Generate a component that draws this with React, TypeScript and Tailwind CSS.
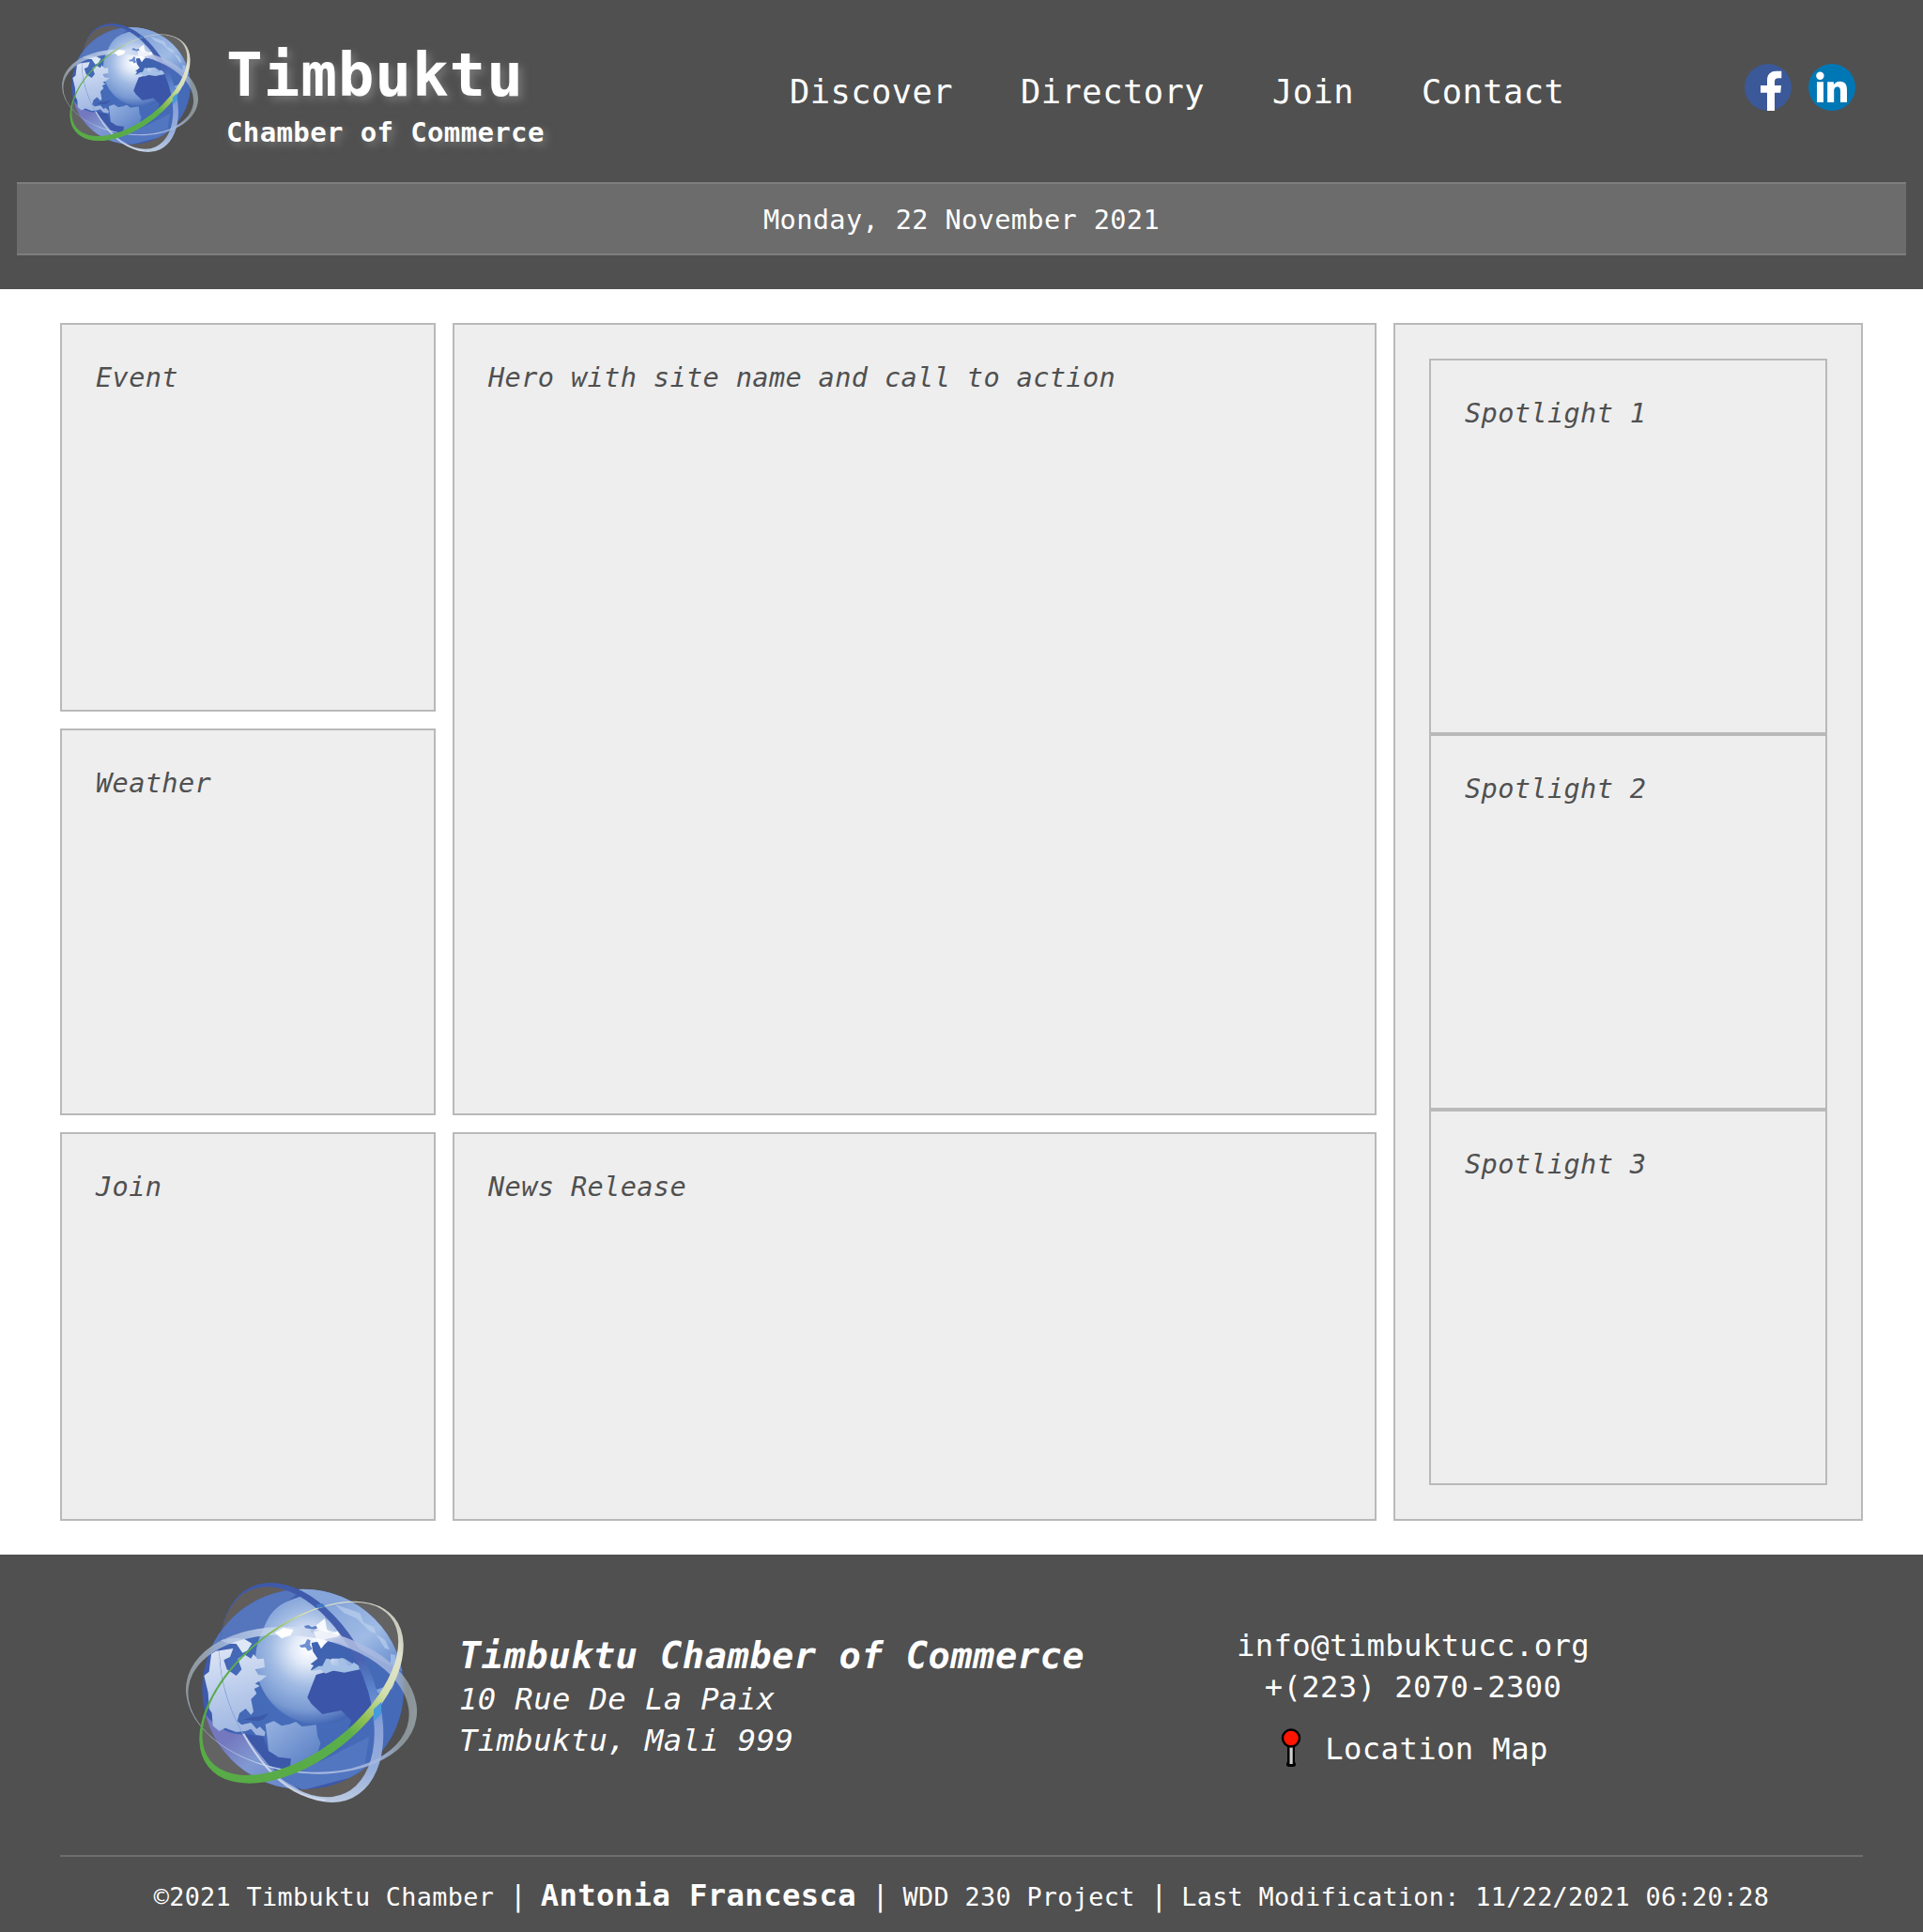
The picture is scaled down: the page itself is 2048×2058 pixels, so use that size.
import React from "react";

type Ellipse = { cx: number; cy: number; rx: number; ry: number; angle: number };

function RingMask({ id, outer, inner }: { id: string; outer: Ellipse; inner: Ellipse }) {
  return (
    <mask id={id} maskUnits="userSpaceOnUse" x="0" y="0" width="900" height="900">
      <ellipse cx={outer.cx} cy={outer.cy} rx={outer.rx} ry={outer.ry} transform={`rotate(${outer.angle} ${outer.cx} ${outer.cy})`} fill="#fff" />
      <ellipse cx={inner.cx} cy={inner.cy} rx={inner.rx} ry={inner.ry} transform={`rotate(${inner.angle} ${inner.cx} ${inner.cy})`} fill="#000" />
    </mask>
  );
}

function Globe({ id, className }: { id: string; className: string }) {
  const u = (n: string) => `url(#${id}-${n})`;
  return (
    <svg viewBox="54 108 738 702" className={className} preserveAspectRatio="none" aria-hidden="true">
      <defs>
        <radialGradient id={`${id}-ball`} gradientUnits="userSpaceOnUse" cx="430" cy="430" r="330">
          <stop offset="0" stopColor="#4670bd" />
          <stop offset="0.75" stopColor="#4468b6" />
          <stop offset="1" stopColor="#3c57ab" />
        </radialGradient>
        <radialGradient id={`${id}-glow`} gradientUnits="userSpaceOnUse" cx="445" cy="320" r="245">
          <stop offset="0" stopColor="#ffffff" />
          <stop offset="0.2" stopColor="#e3ebf8" />
          <stop offset="0.5" stopColor="#a0bae3" />
          <stop offset="0.8" stopColor="#7899d2" />
          <stop offset="1" stopColor="#4468b6" />
        </radialGradient>
        <linearGradient id={`${id}-na`} gradientUnits="userSpaceOnUse" x1="150" y1="300" x2="230" y2="600">
          <stop offset="0" stopColor="#dfe7f6" />
          <stop offset="0.5" stopColor="#bccdec" />
          <stop offset="1" stopColor="#9cb4e0" />
        </linearGradient>
        <linearGradient id={`${id}-sa`} gradientUnits="userSpaceOnUse" x1="320" y1="560" x2="450" y2="720">
          <stop offset="0" stopColor="#93afdf" />
          <stop offset="1" stopColor="#567cc2" />
        </linearGradient>
        <linearGradient id={`${id}-asia`} gradientUnits="userSpaceOnUse" x1="540" y1="160" x2="720" y2="400">
          <stop offset="0" stopColor="#86a5da" />
          <stop offset="0.5" stopColor="#9fbbe5" />
          <stop offset="1" stopColor="#6288cb" />
        </linearGradient>
        <linearGradient id={`${id}-low`} gradientUnits="userSpaceOnUse" x1="200" y1="600" x2="330" y2="760">
          <stop offset="0" stopColor="#7479bf" />
          <stop offset="0.5" stopColor="#8199d2" />
          <stop offset="1" stopColor="#6d8bcb" />
        </linearGradient>
        <linearGradient id={`${id}-ra`} gradientUnits="userSpaceOnUse" x1="54" y1="450" x2="792" y2="520">
          <stop offset="0" stopColor="#98a3a9" />
          <stop offset="0.15" stopColor="#a9bddd" />
          <stop offset="0.42" stopColor="#d5e2f4" />
          <stop offset="0.65" stopColor="#b4c0e4" />
          <stop offset="0.88" stopColor="#a3b6df" />
          <stop offset="0.95" stopColor="#939fa5" />
          <stop offset="1" stopColor="#9ba7ab" />
        </linearGradient>
        <linearGradient id={`${id}-rb`} gradientUnits="userSpaceOnUse" x1="150" y1="450" x2="550" y2="50">
          <stop offset="0" stopColor="#58ab47" />
          <stop offset="0.36" stopColor="#5bb04c" />
          <stop offset="0.48" stopColor="#93c054" />
          <stop offset="0.66" stopColor="#d3dfae" />
          <stop offset="0.85" stopColor="#e2e3cf" />
          <stop offset="1" stopColor="#c9c9c0" />
        </linearGradient>
        <linearGradient id={`${id}-rc`} gradientUnits="userSpaceOnUse" x1="423" y1="108" x2="423" y2="810">
          <stop offset="0" stopColor="#3e59aa" />
          <stop offset="0.35" stopColor="#4963b2" />
          <stop offset="0.48" stopColor="#5a84cb" />
          <stop offset="0.65" stopColor="#89a1da" />
          <stop offset="0.85" stopColor="#96aedb" />
          <stop offset="1" stopColor="#bccbe1" />
        </linearGradient>
        <clipPath id={`${id}-c`}>
          <ellipse cx="428" cy="448" rx="322" ry="320" />
        </clipPath>
        <RingMask
          id={`${id}-ma`}
          outer={{ cx: 423, cy: 484, rx: 371.7, ry: 230.7, angle: 8.8 }}
          inner={{ cx: 414, cy: 494, rx: 355.500, ry: 215, angle: 8.8 }}
        />
        <RingMask
          id={`${id}-mb`}
          outer={{ cx: 423, cy: 458, rx: 381, ry: 214, angle: -38.7 }}
          inner={{ cx: 419.500, cy: 446.500, rx: 368, ry: 197.500, angle: -38.5 }}
        />
        <RingMask
          id={`${id}-mc`}
          outer={{ cx: 423, cy: 459, rx: 373.8, ry: 228, angle: 64.2 }}
          inner={{ cx: 409, cy: 457, rx: 358, ry: 214, angle: 64.5 }}
        />
      </defs>

      <ellipse cx="423" cy="459" rx="371" ry="226" transform="rotate(64.2 423 459)" fill="#8a7f78" opacity="0.3" />
      <ellipse cx="423" cy="458" rx="379" ry="212" transform="rotate(-38.7 423 458)" fill="#a8a8a8" opacity="0.22" />

      <ellipse cx="428" cy="448" rx="322" ry="320" fill={u("ball")} />
      <g clipPath={u("c")}>
        <path d="M100 340 C120 250 260 120 430 128 C400 150 330 200 300 262 C220 265 160 285 118 340Z" fill="#5575bd" />
        <path d="M380 128 C460 120 540 140 600 180 L560 280 L300 262 C320 200 350 170 430 150Z" fill="#8ba9dc" />
        <circle cx="482" cy="355" r="206" fill={u("glow")} />
        <path d="M470 128 C600 130 740 230 760 400 L700 372 L600 315 L540 250 L498 222 L500 190 L430 140Z" fill={u("asia")} />
        <path d="M530 178 L575 192 L610 205 L622 235 L655 250 L662 272 L690 290 L705 322 L690 318 L660 270 L640 262 L600 222 L560 205Z" fill="#c0d3ef" opacity="0.6" />
        <path d="M600 315 L690 365 L760 400 L750 560 L690 690 L600 750 L560 640 L640 540 L620 420Z" fill="#456ab8" />
        <path d="M110 520 C150 580 220 600 240 590 C290 660 340 720 420 770 C300 770 150 700 110 520Z" fill={u("low")} />
        <path d="M380 690 L480 680 L640 600 L620 720 L430 770 L340 730Z" fill="#5276c0" />
        <path d="M240 590 L300 600 L318 645 L350 665 L390 670 L385 705 L320 692Z" fill="#3c58a9" />
        <path d="M455 300 L500 292 L545 300 L610 335 L625 390 L560 350 L520 350 L482 382 L452 388 L462 372 L452 368 L475 350 L460 328Z" fill="#4063b1" />
        <path d="M470 402 L520 388 L560 395 L612 385 L630 440 L660 495 L650 530 L612 560 L580 590 L570 585 L583 548 L550 516 L490 528 L455 495 L442 475 L455 440Z" fill="#3b56a8" />
        <path d="M456 254 L480 236 L498 222 L504 256 L516 272 L540 262 L550 285 L524 288 L526 298 L508 294 L496 306 L486 319 L474 296 L458 290 L452 276Z" fill="#f6f9fe" />
        <path d="M432 246 L446 243 L456 250 L470 245 L474 254 L462 258 L466 270 L454 268 L450 256 L436 254Z" fill="#5f82c6" />
        <path d="M416 308 L434 303 L442 288 L452 292 L450 306 L458 320 L444 326 L436 314 L422 315Z" fill="#6d90d0" />
        <path d="M452 390 L478 374 L490 374 L502 350 L514 352 L520 370 L545 375 L540 352 L555 348 L568 370 L578 375 L590 362 L608 374 L605 385 L560 393 L530 387 L500 398 L485 386Z" fill="#a4c0e7" />
        <path d="M135 335 L150 326 L205 318 L195 345 L175 355 L185 385 L215 405 L232 385 L220 352 L240 337 L262 350 L270 336 L283 352 L303 350 L306 378 L276 385 L285 402 L312 405 L294 420 L275 430 L290 438 L272 447 L280 462 L262 480 L270 520 L262 530 L245 510 L225 525 L218 550 L232 562 L262 555 L280 575 L290 568 L308 586 L305 598 L278 594 L262 575 L245 582 L215 585 L180 572 L160 582 L140 565 L137 525 L128 510 L125 460 L112 405 L128 392Z" fill={u("na")} />
        <path d="M165 292 L200 284 L240 287 L265 302 L250 325 L235 332 L215 303 L190 302Z" fill="#dfe8f7" />
        <path d="M308 560 L335 550 L360 565 L385 560 L405 552 L425 568 L470 562 L475 600 L484 620 L474 655 L478 672 L440 700 L385 715 L390 670 L350 665 L318 645 L314 605Z" fill={u("sa")} />
        <path d="M662 450 L690 440 L702 415 L720 430 L712 448 L690 452 L668 462Z" fill="#83a6de" />
        <path d="M708 335 L724 340 L722 375 L708 365Z" fill="#9bb8e8" />
        <path d="M238 545 L262 538 L290 535 L318 525 L300 545 L285 550Z" fill="#3c58a9" />
      </g>

      <rect x="54" y="108" width="738" height="702" fill={u("rc")} mask={u("mc")} />
      <path d="M238 590 Q310 720 400 772 Q445 797 500 803" fill="none" stroke="#d5dced" strokeWidth="6" opacity="0.85" />
      <rect x="54" y="108" width="738" height="702" fill={u("ra")} mask={u("ma")} opacity="0.85" />
      <path d="M338 268 L365 252 L398 258 L388 276 L360 286Z" fill="#ffffff" />
      <path d="M462 264 L500 258 L540 268 L542 280 L500 288 L486 308 L470 286Z" fill="#ffffff" opacity="0.7" />
      <rect x="54" y="108" width="738" height="702" fill={u("rb")} mask={u("mb")} />
      <path d="M654 512 L679 488 L678 528 L653 552Z" fill="#479bdb" />
      <path d="M468 179 L490 174 L500 184 L478 189Z" fill="#3f78c4" />
    </svg>
  );
}

function Facebook() {
  return (
    <svg viewBox="0 0 50 50" className="size-[50px]" role="img" aria-label="Facebook">
      <circle cx="25" cy="25" r="25" fill="#3b5998" />
      <path d="M24 50V30.7H17V23H24V17.5C24 11 28 7.7 33.5 7.7H39.3V15.3H36C33 15.3 32 16.5 32 19V23H39L38.3 30.7H32V50Z" fill="#fff" />
    </svg>
  );
}

function LinkedIn() {
  return (
    <svg viewBox="0 0 50 50" className="size-[50px]" role="img" aria-label="LinkedIn">
      <circle cx="25" cy="25" r="25" fill="#0077b5" />
      <circle cx="12.4" cy="12.8" r="4.2" fill="#fff" />
      <path d="M9 19.3h7V41H9zM20.2 19.3h6.7v3C28 20.3 30.3 18.7 33.5 18.7c5.800 0 7.500 3.700 7.500 9.300V41h-7V29.500c0-2.800-.4-5-3.200-5s-3.600 2.200-3.600 5V41h-7z" fill="#fff" />
    </svg>
  );
}

function Pin() {
  return (
    <svg viewBox="0 0 22 42" className="h-[42px] w-[22px]" aria-hidden="true">
      <rect x="6" y="35.500" width="10" height="5.500" rx="2.700" fill="#000" />
      <rect x="7" y="16" width="8" height="23" fill="#000" />
      <rect x="9.500" y="16" width="3.200" height="22" fill="#d0d0d0" />
      <circle cx="11" cy="10.500" r="9" fill="#ff1500" stroke="#000" strokeWidth="2.400" />
    </svg>
  );
}

function Bar() {
  return <span className="text-[30px] tracking-[-0.052em]!">|</span>;
}

function Panel({ title, className = "" }: { title: string; className?: string }) {
  return (
    <section className={`border-2 border-[#b9b9b9] bg-[#eeeeee] p-9 text-[28.6px] leading-[40px] text-[#505050] italic ${className}`}>
      {title}
    </section>
  );
}

export default function App() {
  return (
    <div className="flex h-[2058px] w-[2048px] flex-col bg-white font-['DejaVu_Sans_Mono',monospace] whitespace-nowrap text-white **:tracking-[0.0128em]">
      <header className="h-[308px] bg-[#505050] px-[18px]">
        <div className="flex h-[194px] items-start pr-[54px] pl-12">
          <Globe id="top" className="mt-[25px] h-[137px] w-[145px] shrink-0" />
          <div className="mt-[44px] ml-[30px] w-[600px] shrink-0 font-bold [text-shadow:4px_4px_8px_#777]">
            <h1 className="text-[64.4px] leading-[72px]">Timbuktu</h1>
            <div className="pt-[6px] text-[29px] leading-[38px]">Chamber of Commerce</div>
          </div>
          <nav className="mt-[74px] flex gap-[72px] text-[35.4px] leading-[47px]">
            <a>Discover</a>
            <a>Directory</a>
            <a>Join</a>
            <a>Contact</a>
          </nav>
          <div className="mt-[68px] ml-auto flex gap-[18px]">
            <Facebook />
            <LinkedIn />
          </div>
        </div>
        <div className="flex h-[78px] items-center justify-center border-y-2 border-[#7e7e7e] bg-[#6c6c6c] pt-px text-[28.6px] leading-[40px]">
          Monday, 22 November 2021
        </div>
      </header>

      <main className="grid h-[1348px] grid-cols-[400px_984px_500px] grid-rows-[414px_412px_414px] gap-[18px] px-16 py-9">
        <Panel title="Event" />
        <Panel title="Hero with site name and call to action" className="row-span-2" />
        <aside className="row-span-3 grid grid-rows-3 border-2 border-[#b9b9b9] bg-[#eeeeee] p-9">
          <Panel title="Spotlight 1" />
          <Panel title="Spotlight 2" />
          <Panel title="Spotlight 3" />
        </aside>
        <Panel title="Weather" />
        <Panel title="Join" />
        <Panel title="News Release" />
      </main>

      <footer className="h-[402px] bg-[#505050] px-16">
        <div className="flex h-[320px] items-start pl-[134px]">
          <Globe id="foot" className="mt-[30px] h-[234px] w-[246px] shrink-0" />
          <address className="mt-[86px] ml-[45px] w-[828px] shrink-0 text-[32.2px] leading-[44px]">
            <div className="pb-[2px] text-[38.7px] font-bold">Timbuktu Chamber of Commerce</div>
            <div>10 Rue De La Paix</div>
            <div>Timbuktu, Mali 999</div>
          </address>
          <div className="mt-[75px] flex w-[376px] flex-col items-center text-[32.2px] leading-[44px]">
            <div>info@timbuktucc.org</div>
            <div>+(223) 2070-2300</div>
            <div className="flex gap-[25px] pt-[22px] pl-[3px]">
              <Pin />
              <span>Location Map</span>
            </div>
          </div>
        </div>
        <div className="flex h-[82px] items-baseline justify-center border-t-2 border-[#6d6d6d] pt-[18px] text-[26.8px] leading-[46px] whitespace-pre">
          <span>©2021 Timbuktu Chamber <Bar /> </span>
          <strong className="text-[32.2px]">Antonia Francesca</strong>
          <span> <Bar /> WDD 230 Project <Bar /> Last Modification: 11/22/2021 06:20:28</span>
        </div>
      </footer>
    </div>
  );
}
